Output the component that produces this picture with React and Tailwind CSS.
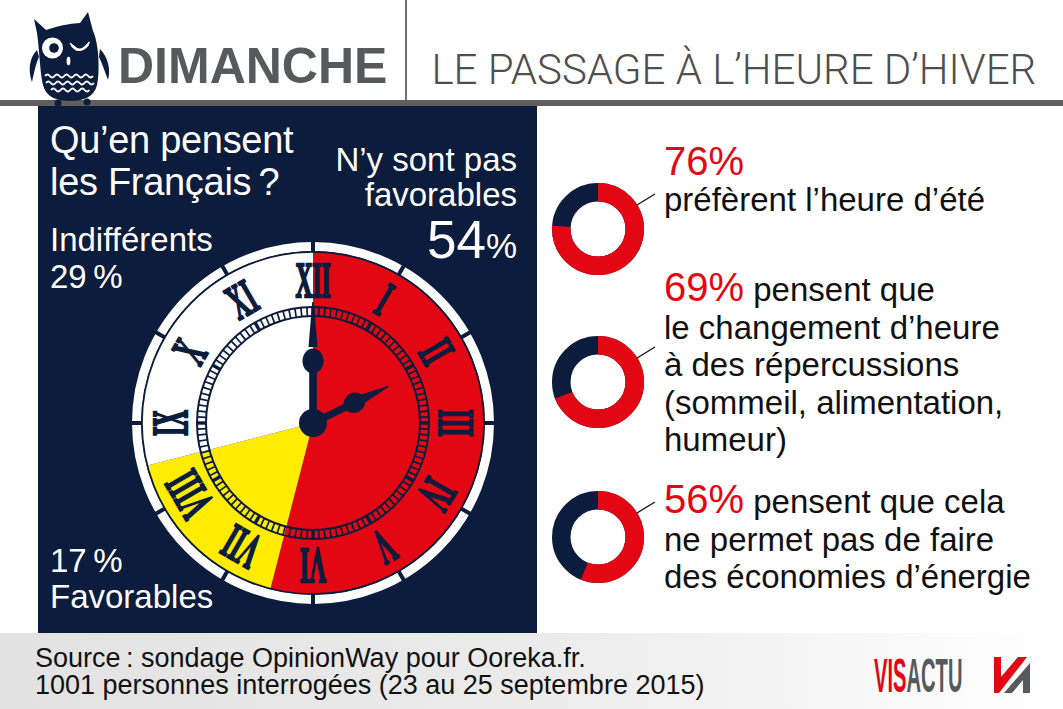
import React from 'react';

const navy = '#0c1c3c';
const red = '#e30613';
const yellow = '#ffec00';

function Owl() {
  const wave = (x, y, n) => {
    let d = `M${x} ${y} q2.4 -3 4.8 0`;
    for (let i = 1; i < n; i++) d += ' t4.8 0';
    return d;
  };
  return (
    <svg viewBox="0 0 90 101" className="relative z-10 ml-[25px] mt-[5px] h-[101px] w-[90px] shrink-0 overflow-visible">
      <path fill={navy} d="M9 14 L21 25 Q38 19 55 18 L63 7 L68 26 C74 38 75 68 72 80 C69 92 59 96 45 96 C31 96 21 92 18 80 C15 68 14 40 12 28 Z" />
      <path fill={navy} d="M12 45 C4 53 3 66 7 77 C9 68 11 58 14 52 Z" />
      <path fill={navy} d="M75 44 C83 52 86 64 83 75 C80 67 77 58 74 52 Z" />
      <circle cx="33" cy="98" r="3.5" fill={navy} />
      <circle cx="62" cy="97" r="3.5" fill={navy} />
      <circle cx="27.5" cy="43" r="10.5" fill="#fff" />
      <circle cx="29" cy="43" r="4.8" fill={navy} />
      <path d="M47.5 41 Q55 49 62.5 40" stroke="#fff" strokeWidth="2.6" fill="none" strokeLinecap="round" />
      <path d="M47.5 41 L45.5 38.5 M62.5 40 L64 37.5" stroke="#fff" strokeWidth="1.6" strokeLinecap="round" />
      <ellipse cx="43.5" cy="56" rx="1.9" ry="4.2" fill="#fff" />
      <path d={wave(20, 71, 10)} stroke="#fff" strokeWidth="1.8" fill="none" />
      <path d={wave(21, 78, 10)} stroke="#fff" strokeWidth="1.8" fill="none" />
      <path d={wave(26, 85, 8)} stroke="#fff" strokeWidth="1.8" fill="none" />
    </svg>
  );
}

function Clock({ className }) {
  const pt = (deg, r) => {
    const a = (deg * Math.PI) / 180;
    return [r * Math.sin(a), -r * Math.cos(a)];
  };
  const sector = (a0, a1, r) => {
    const [x0, y0] = pt(a0, r);
    const [x1, y1] = pt(a1, r);
    const large = a1 - a0 > 180 ? 1 : 0;
    return `M0 0 L${x0} ${y0} A${r} ${r} 0 ${large} 1 ${x1} ${y1} Z`;
  };
  const numerals = ['XII', 'I', 'II', 'III', 'IV', 'V', 'VI', 'VII', 'VIII', 'IX', 'X', 'XI'];
  const ticks = Array.from({ length: 120 }, (_, i) => i * 3);

  return (
    <svg viewBox="-181 -181 362 362" className={`h-[362px] w-[362px] ${className}`}>
      {/* outer ring with hour notches */}
      <circle r="176.5" fill="none" stroke="#fff" strokeWidth="9" />
      {numerals.map((_, i) => (
        <rect key={i} x="-2" y="-182" width="4" height="11" fill={navy} transform={`rotate(${i * 30})`} />
      ))}
      {/* face: 54% / 17% / 29% */}
      <path d={sector(0, 194.4, 171)} fill={red} />
      <path d={sector(194.4, 255.6, 171)} fill={yellow} />
      <path d={sector(255.6, 360, 171)} fill="#fff" />
      <circle r="171" fill="none" stroke={navy} strokeWidth="1.6" />

      {numerals.map((n, i) => (
        <text
          key={n}
          x="0"
          y="0"
          textAnchor="middle"
          fill={navy}
          stroke={navy}
          strokeWidth="2.4"
          fontFamily="'Liberation Serif', serif"
          fontWeight="700"
          fontSize="50"
          transform={`rotate(${i * 30}) translate(0 -126) scale(0.47 1)`}
        >
          {n}
        </text>
      ))}

      {/* minute track */}
      <circle r="116" fill="none" stroke={navy} strokeWidth="2" />
      <circle r="107" fill="none" stroke={navy} strokeWidth="2" />
      {ticks.map((a) => {
        const [x0, y0] = pt(a, 107);
        const [x1, y1] = pt(a, 116);
        return <line key={a} x1={x0} y1={y0} x2={x1} y2={y1} stroke={navy} strokeWidth={a % 30 === 0 ? 3.4 : 1.7} />;
      })}

      {/* minute hand */}
      <g fill={navy}>
        <path d="M-0.8 -121 L0.8 -121 L4.5 -76 L-4.5 -76 Z" />
        <ellipse cx="0" cy="-62" rx="10.5" ry="12.5" />
        <rect x="-3.8" y="-55" width="7.6" height="55" />
      </g>
      {/* hour hand */}
      <g fill={navy} transform="rotate(64)">
        <rect x="-3.6" y="-40" width="7.2" height="40" />
        <ellipse cx="0" cy="-46" rx="10" ry="11" />
        <path d="M-5 -52 L5 -52 L0.6 -84 L-0.6 -84 Z" />
      </g>
      <circle r="14" fill={navy} />
    </svg>
  );
}

function Donut({ p, className }) {
  const r = 36.75;
  const c = 2 * Math.PI * r;
  return (
    <svg viewBox="0 0 104 92" className={`h-[92px] w-[104px] shrink-0 ${className}`}>
      <circle cx="46" cy="46" r={r} fill="none" stroke={navy} strokeWidth="18.5" />
      <circle
        cx="46"
        cy="46"
        r={r}
        fill="none"
        stroke={red}
        strokeWidth="18.5"
        strokeDasharray={`${(c * p) / 100} ${c}`}
        transform="rotate(-90 46 46)"
      />
      <line x1="85" y1="22" x2="103" y2="11" stroke="#111" strokeWidth="1.3" />
    </svg>
  );
}

export default function App() {
  return (
    <div className="relative h-[709px] w-[1063px] overflow-hidden bg-white font-['Liberation_Sans',Arial,sans-serif]">
      {/* Header */}
      <header className="flex h-[100px]">
        <Owl />
        <div className="ml-[3px] self-end pb-[9px] text-[50px] font-bold leading-none text-[#58595b]">DIMANCHE</div>
        <div className="ml-[18px] w-[2px] bg-[#6d6d6d]"></div>
        <div className="ml-[24px] self-end whitespace-nowrap pb-[9px] font-['Roboto',sans-serif] text-[42px] font-light leading-none text-[#4f4f4f]">
          LE PASSAGE À L’HEURE D’HIVER
        </div>
      </header>
      <div className="h-[6px] bg-[#5e5e5e]"></div>

      {/* Main */}
      <div className="flex h-[527px]">
        <div className="relative ml-[38px] flex w-[499px] flex-col justify-between bg-[#0c1c3c] pb-[18px] pl-[12px] pr-[20px] pt-[13px] text-white">
          <div className="flex items-start justify-between">
            <div>
              <p className="text-[38px] leading-[42px] tracking-[-0.3px]">Qu’en pensent<br />les Français{'\u202F'}?</p>
              <p className="mt-[18px] text-[33px] leading-[37px]">Indifférents<br />29{'\u202F'}%</p>
            </div>
            <div className="mt-[23px] text-right">
              <p className="text-[33px] leading-[35px]">N’y sont pas<br />favorables</p>
              <p className="mt-[3px] leading-[50px]">
                <span className="text-[53px]">54</span>
                <span className="text-[35px]">%</span>
              </p>
            </div>
          </div>
          <p className="text-[33px] leading-[36px]">17{'\u202F'}%<br />Favorables</p>
          <Clock className="absolute left-[94px] top-[136px]" />
        </div>

        <div className="flex-1 pl-[15px] pt-[37px] text-[33px] text-[#111]">
          <div className="flex h-[126px] items-start gap-[8px]">
            <Donut p={76} className="mt-[40px]" />
            <p className="leading-[36px]">
              <span className="text-[40px] text-[#e30613]">76%</span>
              <br />
              préfèrent l’heure d’été
            </p>
          </div>
          <div className="flex h-[212px] items-start gap-[8px]">
            <Donut p={69} className="mt-[67px]" />
            <p className="leading-[37.5px]">
              <span className="text-[40px] text-[#e30613]">69%</span> pensent que
              <br />
              le changement d’heure
              <br />
              à des répercussions
              <br />
              (sommeil, alimentation,
              <br />
              humeur)
            </p>
          </div>
          <div className="flex items-start gap-[8px]">
            <Donut p={56} className="mt-[10px]" />
            <p className="leading-[37.5px]">
              <span className="text-[40px] text-[#e30613]">56%</span> pensent que cela
              <br />
              ne permet pas de faire
              <br />
              des économies d’énergie
            </p>
          </div>
        </div>
      </div>

      {/* Footer */}
      <footer className="flex h-[76px] items-start justify-between bg-linear-to-r from-[#e2e2e2] via-[#ebebeb] to-white pl-[35px] pr-[33px] pt-[12px]">
        <p className="text-[27px] leading-[27px] text-[#111]">
          Source{'\u202F'}: sondage OpinionWay pour Ooreka.fr.
          <br />
          1001 personnes interrogées (23 au 25 septembre 2015)
        </p>
        <div className="mt-[12px] flex items-center">
          <div className="h-[35px] w-[90px]">
            <span className="inline-block origin-top-left scale-x-[0.42] whitespace-nowrap text-[48px] font-bold leading-[35px]">
              <span className="text-[#e30613]">VIS</span>
              <span className="text-[#58595b]">ACTU</span>
            </span>
          </div>
          <svg viewBox="0 0 36 36" className="ml-[30px] h-[36px] w-[36px]">
            <path fill={red} d="M0 0 L7 0 L7 20 L24 0 L33 0 L5 36 L0 36 Z" />
            <path fill="#58595b" d="M10 36 L36 6 L36 36 L29 36 L29 23 L18 36 Z" />
          </svg>
        </div>
      </footer>
    </div>
  );
}
